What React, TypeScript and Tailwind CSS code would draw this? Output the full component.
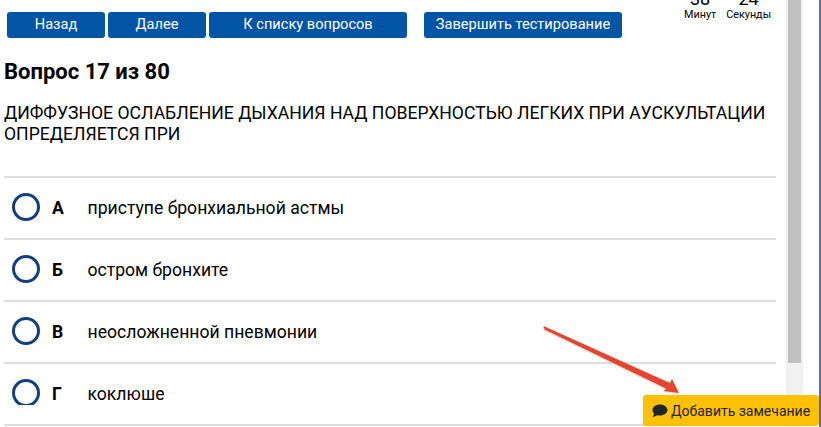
const navButtons = [
  { label: 'Назад', width: 'w-[98px]' },
  { label: 'Далее', width: 'w-[98px]' },
  { label: 'К списку вопросов', width: 'w-[198px]' },
];

const answers = [
  { letter: 'А', text: 'приступе бронхиальной астмы' },
  { letter: 'Б', text: 'остром бронхите' },
  { letter: 'В', text: 'неосложненной пневмонии' },
  { letter: 'Г', text: 'коклюше', clipped: true },
];

export default function App() {
  return (
    <div className="relative h-[427px] w-[821px] overflow-hidden bg-white font-['Roboto',sans-serif] text-black">
      <div className="flex h-full">
        <div className="h-[427px] w-[776px] shrink-0 overflow-hidden">
          {/* Top bar */}
          <div className="flex h-[38px] items-end pl-[7px]">
            <div className="flex gap-[3px]">
              {navButtons.map((b) => (
                <button key={b.label} className={`h-[26px] rounded-[3px] bg-[#0254a5] text-[14.6px] text-white ${b.width}`}>
                  {b.label}
                </button>
              ))}
            </div>
            <button className="ml-[17px] h-[26px] w-[198px] rounded-[3px] bg-[#0254a5] text-[14.6px] text-white">
              Завершить тестирование
            </button>
          </div>

          <h1 className="mt-[20px] pl-[4px] text-[22px] leading-[28px] font-bold">Вопрос 17 из 80</h1>
          <p className="mt-[17px] pl-[4px] text-[17.6px] leading-[21px]">
            ДИФФУЗНОЕ ОСЛАБЛЕНИЕ ДЫХАНИЯ НАД ПОВЕРХНОСТЬЮ ЛЕГКИХ ПРИ АУСКУЛЬТАЦИИ
            <br />
            ОПРЕДЕЛЯЕТСЯ ПРИ
          </p>

          <div className="mt-[31px] ml-[4px] border-t-2 border-[#dedede]">
            {answers.map((a) => (
              <div key={a.letter} className="flex h-[62px] items-center border-b-2 border-[#dedede]">
                <div className={a.clipped ? 'ml-[8px] mt-[-2px] h-[28px] w-[28px] shrink-0 overflow-hidden [clip-path:inset(0_0_2px_0)]' : 'ml-[8px] mt-[-2px] h-[28px] w-[28px] shrink-0'}>
                  <div className="h-[28px] w-[28px] rounded-full border-[3px] border-[#12407f]" />
                </div>
                <span className="ml-[12px] w-[35.5px] text-[17.6px] font-bold">{a.letter}</span>
                <span className="text-[17.6px]">{a.text}</span>
              </div>
            ))}
          </div>
        </div>

        <div className="w-[10px] shrink-0 bg-white" />
        {/* Scrollbar */}
        <div className="h-full w-[17px] shrink-0 bg-[#f1f1f1] px-[2px]">
          <div className="h-[363px] w-full bg-[#c1c1c1]" />
        </div>
        <div className="flex-1 bg-white" />
        <div className="w-[2px] bg-[#5b6bb5]" />
      </div>

      {/* Timer, cut off by the top of the page */}
      <div className="absolute top-[-9px] left-[684px] flex gap-[10px] text-center text-[10.8px] leading-[14px]">
        <div>
          <div className="text-lg leading-[16px]">38</div>
          <div className="mt-[1px]">Минут</div>
        </div>
        <div>
          <div className="text-lg leading-[16px]">24</div>
          <div className="mt-[1px]">Секунды</div>
        </div>
      </div>

      {/* Red annotation arrow */}
      <svg className="absolute top-[320px] left-[540px]" width="145" height="80" viewBox="0 0 145 80">
        <path d="M3.5 6 L130 63 L132 59 L139 73 L124 71 L126 68.5 L4.5 9.5 Z" fill="#9a9a9a" opacity="0.35" transform="translate(-1 1)" />
        <path d="M3.5 6 L130 63 L132 59 L139 73 L124 71 L126 68.5 L4.5 9.5 Z" fill="#e8432f" />
      </svg>

      {/* Note button */}
      <button className="absolute top-[395px] left-[643px] flex h-[31px] w-[176px] items-center gap-[3px] rounded-[3px] bg-[#ffc107] pl-[9px] text-sm text-[#212529]">
        <svg width="16" height="14" viewBox="0 0 16 14" fill="#212529">
          <path d="M8 0.5C3.9 0.5 0.5 2.9 0.5 6c0 1.3 0.6 2.5 1.6 3.4C1.8 10.7 1 11.9 0.6 12.8c2 0 3.4-.8 4.3-1.6C5.8 11.4 6.9 11.5 8 11.5c4.1 0 7.5-2.5 7.5-5.5S12.1 0.5 8 0.5z" />
        </svg>
        Добавить замечание
      </button>
    </div>
  );
}
